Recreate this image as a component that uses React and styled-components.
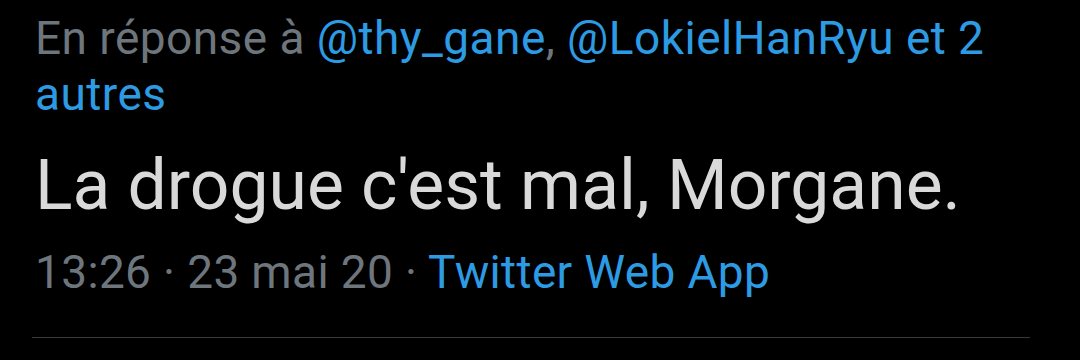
import React from "react";
import styled, { createGlobalStyle } from "styled-components";

const GlobalStyle = createGlobalStyle`
    body {
        margin: 0;
        background-color: #000;
        font-family: Roboto, "Noto Sans", sans-serif;
    }
`;

export default function App() {
    return (
        <>
            <GlobalStyle />
            <Tweet>
                <ReplyTo>
                    En réponse à <Link>@thy_gane</Link>, <Link>@LokielHanRyu et 2 autres</Link>
                </ReplyTo>
                <Body>La drogue c'est mal, Morgane.</Body>
                <Meta>
                    13:26 · 23 mai 20 · <Link>Twitter Web App</Link>
                </Meta>
                <Divider />
            </Tweet>
        </>
    );
}

// ::::::::::Styled-Components::::::::::
const Tweet = styled.div`
    width: 1080px;
    height: 360px;
    box-sizing: border-box;
    padding: 10px 50px 0 35px;
    background-color: #000;

    display: flex;
    flex-direction: column;
`;
const ReplyTo = styled.div`
    font-size: 46px;
    line-height: 56px;
    letter-spacing: 0.45px;
    color: #6e767d;
`;
const Link = styled.span`
    color: #2d9be3;
`;
const Body = styled.div`
    margin-top: 23px;
    font-size: 69.6px;
    line-height: 80px;
    color: #d9d9d9;
`;
const Meta = styled.div`
    margin-top: 19px;
    font-size: 46px;
    line-height: 56px;
    letter-spacing: 0.35px;
    color: #6e767d;
`;
const Divider = styled.div`
    margin-top: 37px;
    margin-left: -3px;
    height: 1px;
    background-color: #38393b;
`;
